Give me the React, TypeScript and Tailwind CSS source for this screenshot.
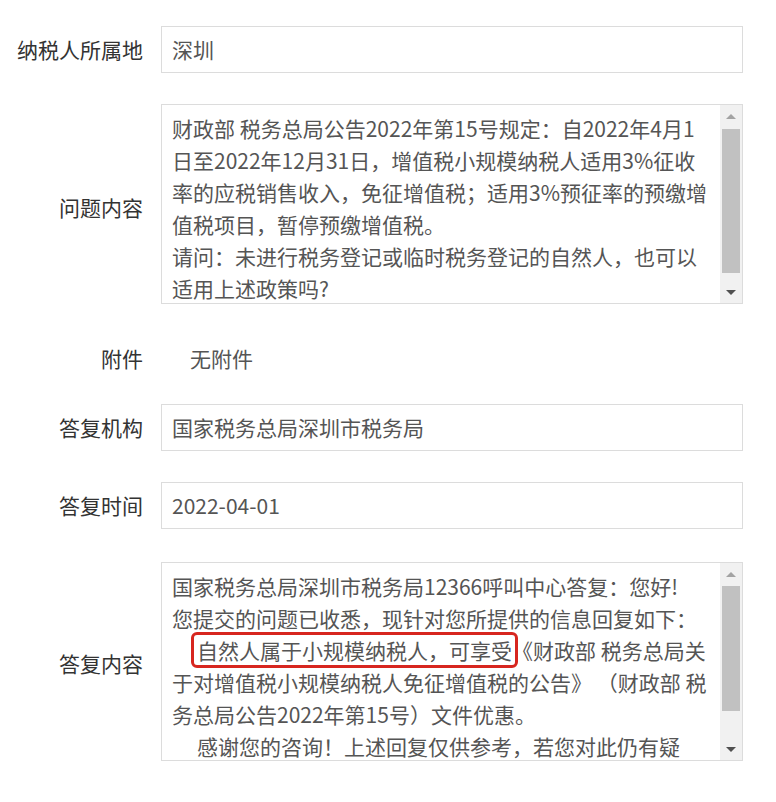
const FONT = { fontFamily: '"Noto Sans CJK SC", "Microsoft YaHei", "Noto Sans", sans-serif' };

function Label({ children, top = 0 }: { children: React.ReactNode; top?: number }) {
  return (
    <div className="w-[161px] shrink-0 pr-[18px] text-right text-[21px] text-[#333]" style={{ paddingTop: top }}>
      {children}
    </div>
  );
}

function Input({ value }: { value: string }) {
  return (
    <div className="flex-1 h-[47px] border border-[#dcdcdc] pl-[10px] flex items-center text-[21px] text-[#555]">
      {value}
    </div>
  );
}

function ScrollBar({ thumbTop, thumbH }: { thumbTop: number; thumbH: number }) {
  return (
    <div className="w-[22px] shrink-0 bg-[#f1f1f1] flex flex-col">
      <div className="h-[22px] flex items-center justify-center">
        <div className="w-0 h-0 border-l-[5px] border-r-[5px] border-b-[5px] border-l-transparent border-r-transparent border-b-[#a3a3a3]" />
      </div>
      <div className="flex-1 flex flex-col px-[2px]">
        <div style={{ height: thumbTop }} />
        <div className="bg-[#c1c1c1]" style={{ height: thumbH }} />
      </div>
      <div className="h-[22px] flex items-center justify-center">
        <div className="w-0 h-0 border-l-[5px] border-r-[5px] border-t-[5px] border-l-transparent border-r-transparent border-t-[#505050]" />
      </div>
    </div>
  );
}

function TextArea({ lines, height, thumbTop, thumbH }: {
  lines: React.ReactNode[]; height: number; thumbTop: number; thumbH: number;
}) {
  return (
    <div className="flex-1 border border-[#dcdcdc] flex overflow-hidden" style={{ height }}>
      <div className="flex-1 min-w-0 pl-[10px] pt-[7px] overflow-hidden text-[21px] leading-[32px] text-[#555]">
        {lines.map((l, i) => (
          <div key={i} className="whitespace-nowrap">{l}</div>
        ))}
      </div>
      <ScrollBar thumbTop={thumbTop} thumbH={thumbH} />
    </div>
  );
}

const question = [
  '财政部 税务总局公告2022年第15号规定：自2022年4月1',
  '日至2022年12月31日，增值税小规模纳税人适用3%征收',
  '率的应税销售收入，免征增值税；适用3%预征率的预缴增',
  '值税项目，暂停预缴增值税。',
  '请问：未进行税务登记或临时税务登记的自然人，也可以',
  '适用上述政策吗?',
];

const answer = [
  '国家税务总局深圳市税务局12366呼叫中心答复：您好!',
  '您提交的问题已收悉，现针对您所提供的信息回复如下：',
  <div className="pl-[25px]">
    <span className="relative">
      自然人属于小规模纳税人，可享受
      <span className="absolute -left-[6px] -right-[6px] -top-[3px] -bottom-[3px] border-[3.5px] border-[#d7261f] rounded-[6px]" />
    </span>
    《财政部 税务总局关
  </div>,
  '于对增值税小规模纳税人免征增值税的公告》 （财政部 税',
  '务总局公告2022年第15号）文件优惠。',
  <div className="pl-[25px]">感谢您的咨询！上述回复仅供参考，若您对此仍有疑</div>,
];

export default function App() {
  return (
    <div className="w-[776px] h-[802px] bg-white pt-[26px] pr-[33px] overflow-hidden" style={FONT}>
      <div className="flex items-center">
        <Label>纳税人所属地</Label>
        <Input value="深圳" />
      </div>

      <div className="flex items-center mt-[31px]">
        <Label top={8}>问题内容</Label>
        <TextArea lines={question} height={200} thumbTop={2} thumbH={144} />
      </div>

      <div className="flex items-center h-[47px] mt-[31px]">
        <Label>附件</Label>
        <div className="pl-[29px] text-[21px] text-[#555]">无附件</div>
      </div>

      <div className="flex items-center mt-[22px]">
        <Label>答复机构</Label>
        <Input value="国家税务总局深圳市税务局" />
      </div>

      <div className="flex items-center mt-[31px]">
        <Label>答复时间</Label>
        <Input value="2022-04-01" />
      </div>

      <div className="flex items-center mt-[33px]">
        <Label top={4}>答复内容</Label>
        <TextArea lines={answer} height={199} thumbTop={1} thumbH={125} />
      </div>
    </div>
  );
}
